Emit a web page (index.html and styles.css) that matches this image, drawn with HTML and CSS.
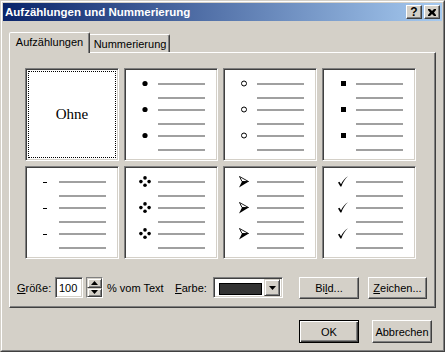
FILE: index.html
```html
<!DOCTYPE html>
<html lang="de">
<head>
    <meta charset="UTF-8">
    <title>Aufzählungen und Nummerierung</title>
    <link rel="stylesheet" href="styles.css">
</head>
<body>
    <div class="window">
        <div class="frame">
            <div class="titlebar">
                <span class="title">Aufzählungen und Nummerierung</span>
                <div class="caption-btns">
                    <div class="cap-btn help">?</div>
                    <div class="cap-btn">
                        <svg width="8" height="7" viewBox="0 0 8 7"><path d="M0 0h2l2 2 2-2h2v1L6 3.5 8 6v1H6L4 5 2 7H0V6l2-2.5L0 1z" fill="#000"/></svg>
                    </div>
                </div>
            </div>

            <div class="content">
                <div class="tabs">
                    <div class="tab active">Aufzählungen</div>
                    <div class="tab">Nummerierung</div>
                </div>

                <div class="panel">
                    <div class="gallery">
                        <div class="sample none"><span>Ohne</span></div>

                        <div class="sample">
                            <div class="entry"><svg class="mark" width="12" height="12"><circle cx="6" cy="5.5" r="2.6"/></svg><i></i><b></b></div>
                            <div class="entry"><svg class="mark" width="12" height="12"><circle cx="6" cy="5.5" r="2.6"/></svg><i></i><b></b></div>
                            <div class="entry"><svg class="mark" width="12" height="12"><circle cx="6" cy="5.5" r="2.6"/></svg><i></i><b></b></div>
                        </div>

                        <div class="sample">
                            <div class="entry"><svg class="mark" width="12" height="12"><circle cx="6" cy="5.5" r="2.5" fill="none" stroke="#000"/></svg><i></i><b></b></div>
                            <div class="entry"><svg class="mark" width="12" height="12"><circle cx="6" cy="5.5" r="2.5" fill="none" stroke="#000"/></svg><i></i><b></b></div>
                            <div class="entry"><svg class="mark" width="12" height="12"><circle cx="6" cy="5.5" r="2.5" fill="none" stroke="#000"/></svg><i></i><b></b></div>
                        </div>

                        <div class="sample">
                            <div class="entry"><svg class="mark" width="12" height="12"><rect x="4" y="3" width="5" height="5"/></svg><i></i><b></b></div>
                            <div class="entry"><svg class="mark" width="12" height="12"><rect x="4" y="3" width="5" height="5"/></svg><i></i><b></b></div>
                            <div class="entry"><svg class="mark" width="12" height="12"><rect x="4" y="3" width="5" height="5"/></svg><i></i><b></b></div>
                        </div>

                        <div class="sample">
                            <div class="entry"><svg class="mark" width="12" height="12"><rect x="3" y="6" width="4" height="1"/></svg><i></i><b></b></div>
                            <div class="entry"><svg class="mark" width="12" height="12"><rect x="3" y="6" width="4" height="1"/></svg><i></i><b></b></div>
                            <div class="entry"><svg class="mark" width="12" height="12"><rect x="3" y="6" width="4" height="1"/></svg><i></i><b></b></div>
                        </div>

                        <div class="sample">
                            <div class="entry"><svg class="mark" width="12" height="12"><circle cx="6" cy="1.9" r="1.8"/><circle cx="1.9" cy="5.6" r="1.8"/><circle cx="10.1" cy="5.6" r="1.8"/><circle cx="6" cy="9.3" r="1.8"/></svg><i></i><b></b></div>
                            <div class="entry"><svg class="mark" width="12" height="12"><circle cx="6" cy="1.9" r="1.8"/><circle cx="1.9" cy="5.6" r="1.8"/><circle cx="10.1" cy="5.6" r="1.8"/><circle cx="6" cy="9.3" r="1.8"/></svg><i></i><b></b></div>
                            <div class="entry"><svg class="mark" width="12" height="12"><circle cx="6" cy="1.9" r="1.8"/><circle cx="1.9" cy="5.6" r="1.8"/><circle cx="10.1" cy="5.6" r="1.8"/><circle cx="6" cy="9.3" r="1.8"/></svg><i></i><b></b></div>
                        </div>

                        <div class="sample">
                            <div class="entry"><svg class="mark" width="12" height="12"><path d="M1.5 0.5L10.5 5.5 4 5.5z" fill="none" stroke="#000" stroke-width="0.9"/><path d="M1 11.5L4 5.5 10.8 5.5z"/></svg><i></i><b></b></div>
                            <div class="entry"><svg class="mark" width="12" height="12"><path d="M1.5 0.5L10.5 5.5 4 5.5z" fill="none" stroke="#000" stroke-width="0.9"/><path d="M1 11.5L4 5.5 10.8 5.5z"/></svg><i></i><b></b></div>
                            <div class="entry"><svg class="mark" width="12" height="12"><path d="M1.5 0.5L10.5 5.5 4 5.5z" fill="none" stroke="#000" stroke-width="0.9"/><path d="M1 11.5L4 5.5 10.8 5.5z"/></svg><i></i><b></b></div>
                        </div>

                        <div class="sample">
                            <div class="entry"><svg class="mark" width="12" height="12"><path d="M1 6.5L2.5 5.8 4 8.3C5.8 4.8 7.8 2.3 11 0.3 8 3 6 6 4.4 10.5H3.4z"/></svg><i></i><b></b></div>
                            <div class="entry"><svg class="mark" width="12" height="12"><path d="M1 6.5L2.5 5.8 4 8.3C5.8 4.8 7.8 2.3 11 0.3 8 3 6 6 4.4 10.5H3.4z"/></svg><i></i><b></b></div>
                            <div class="entry"><svg class="mark" width="12" height="12"><path d="M1 6.5L2.5 5.8 4 8.3C5.8 4.8 7.8 2.3 11 0.3 8 3 6 6 4.4 10.5H3.4z"/></svg><i></i><b></b></div>
                        </div>
                    </div>

                    <div class="options">
                        <label class="lbl size-lbl"><u>G</u>röße:</label>
                        <div class="edit">100</div>
                        <div class="spin">
                            <div class="spin-btn"><svg width="7" height="4"><path d="M3.5 0L7 4H0z"/></svg></div>
                            <div class="spin-btn"><svg width="7" height="4"><path d="M0 0h7L3.5 4z"/></svg></div>
                        </div>
                        <span class="lbl unit-lbl">% vom Text</span>
                        <label class="lbl color-lbl"><u>F</u>arbe:</label>
                        <div class="combo">
                            <div class="swatch"></div>
                            <div class="drop"><svg width="7" height="4"><path d="M0 0h7L3.5 4z"/></svg></div>
                        </div>
                        <button class="btn bild-btn">Bi<u>l</u>d...</button>
                        <button class="btn zeichen-btn"><u>Z</u>eichen...</button>
                    </div>
                </div>

                <div class="actions">
                    <button class="btn default">OK</button>
                    <button class="btn">Abbrechen</button>
                </div>
            </div>
        </div>
    </div>
</body>
</html>
```

FILE: styles.css
```css
* {
    box-sizing: border-box;
}

body {
    margin: 0;
    font-family: "Liberation Sans", Arial, sans-serif;
    font-size: 11px;
    color: #000;
    background: #d4d0c8;
}

.window {
    width: 445px;
    height: 352px;
    border: 1px solid;
    border-color: #d4d0c8 #404040 #404040 #d4d0c8;
    background: #d4d0c8;
}

.frame {
    height: 100%;
    border: 1px solid;
    border-color: #fff #808080 #808080 #fff;
    padding: 1px;
    display: flex;
    flex-direction: column;
}

/* Title bar */
.titlebar {
    height: 18px;
    display: flex;
    align-items: center;
    justify-content: space-between;
    padding: 0 2px;
    background: linear-gradient(to right, #0a246a, #a6caf0);
}

.title {
    color: #fff;
    font-weight: bold;
    font-size: 11.5px;
}

.caption-btns {
    display: flex;
    gap: 2px;
}

.cap-btn {
    width: 16px;
    height: 14px;
    display: flex;
    align-items: center;
    justify-content: center;
    background: #d4d0c8;
    border: 1px solid;
    border-color: #fff #404040 #404040 #fff;
    box-shadow: inset -1px -1px #808080;
}

.cap-btn.help {
    font-weight: bold;
    font-size: 12px;
    line-height: 1;
    padding-bottom: 1px;
}

/* Dialog body */
.content {
    flex: 1;
    padding: 11px 6px 6px;
    display: flex;
    flex-direction: column;
}

.tabs {
    height: 20px;
    display: flex;
    align-items: flex-end;
    position: relative;
    z-index: 1;
}

.tab {
    height: 18px;
    width: 82px;
    display: flex;
    align-items: center;
    justify-content: center;
    padding-left: 2px;
    background: #d4d0c8;
    border: 1px solid;
    border-bottom: none;
    border-color: #fff #404040 transparent #fff;
    border-radius: 2px 2px 0 0;
    box-shadow: inset -1px 0 #808080;
}

.tab.active {
    height: 21px;
    width: 81px;
    margin-bottom: -1px;
    margin-right: -2px;
    padding: 0 0 2px;
    position: relative;
    z-index: 2;
}

.panel {
    height: 256px;
    border: 1px solid;
    border-color: #fff #404040 #404040 #fff;
    box-shadow: inset -1px -1px #808080;
    padding-top: 15px;
}

.gallery {
    margin-left: 15px;
    display: grid;
    grid-template-columns: repeat(4, 94px);
    grid-template-rows: repeat(2, 93px);
    gap: 5px;
}

.sample {
    background: #fff;
    border: 1px solid;
    border-color: #808080 #fff #fff #808080;
    box-shadow: inset 1px 1px #404040, inset -1px -1px #d4d0c8;
    padding-top: 9px;
    display: flex;
    flex-direction: column;
    gap: 5px;
}

.sample.none {
    padding: 0;
    align-items: center;
    justify-content: center;
    font-family: "Liberation Serif", "Times New Roman", serif;
    font-size: 15px;
    outline: 1px dotted #000;
    outline-offset: -4px;
}

.entry {
    display: grid;
    grid-template-columns: 33px 47px;
    grid-template-rows: 12px 2px;
    row-gap: 7px;
    align-items: center;
}

.mark {
    margin-left: 14px;
    fill: #000;
}

.entry i,
.entry b {
    display: block;
    height: 2px;
    background: #a0a0a0;
    grid-column: 2;
}

.entry b {
    grid-row: 2;
}

/* Size / colour row */
.options {
    margin-top: 18px;
    padding-left: 7px;
    height: 21px;
    display: flex;
    align-items: center;
}

.lbl {
    white-space: nowrap;
}

.size-lbl {
    width: 38px;
}

.unit-lbl {
    width: 68px;
    margin-left: 4px;
}

.color-lbl {
    width: 38px;
}

.edit {
    width: 28px;
    height: 21px;
    padding: 4px 0 0 3px;
    background: #fff;
    border: 1px solid;
    border-color: #808080 #fff #fff #808080;
    box-shadow: inset 1px 1px #404040, inset -1px -1px #d4d0c8;
}

.spin {
    width: 17px;
    height: 21px;
    margin-left: 3px;
    border: 1px solid;
    border-color: #808080 #fff #fff #808080;
    display: flex;
    flex-direction: column;
}

.spin-btn {
    flex: 1;
    display: flex;
    align-items: center;
    justify-content: center;
    border: 1px solid;
    border-color: #d4d0c8 #404040 #404040 #d4d0c8;
    box-shadow: inset 1px 1px #fff, inset -1px -1px #808080;
}

.combo {
    width: 70px;
    height: 21px;
    padding: 4px 2px 2px 5px;
    display: flex;
    align-items: center;
    gap: 2px;
    background: #fff;
    border: 1px solid;
    border-color: #808080 #fff #fff #808080;
    box-shadow: inset 1px 1px #404040, inset -1px -1px #d4d0c8;
}

.swatch {
    width: 45px;
    height: 12px;
    background: #333;
    border: 1px solid #000;
    align-self: flex-start;
    margin-top: 1px;
}

.drop {
    width: 16px;
    height: 17px;
    margin-top: -2px;
    display: flex;
    align-items: center;
    justify-content: center;
    background: #d4d0c8;
    border: 1px solid;
    border-color: #d4d0c8 #404040 #404040 #d4d0c8;
    box-shadow: inset 1px 1px #fff, inset -1px -1px #808080;
}

/* Push buttons */
.btn {
    font: inherit;
    color: #000;
    padding: 0;
    height: 22px;
    background: #d4d0c8;
    border: 1px solid;
    border-color: #fff #404040 #404040 #fff;
    box-shadow: inset -1px -1px #808080;
}

.bild-btn {
    width: 60px;
    margin-left: 16px;
}

.zeichen-btn {
    width: 59px;
    margin-left: 9px;
}

.actions {
    margin-top: 12px;
    padding-right: 4px;
    display: flex;
    justify-content: flex-end;
    gap: 13px;
}

.actions .btn {
    width: 60px;
    height: 23px;
}

.btn.default {
    border: 1px solid #000;
    box-shadow: inset 1px 1px #fff, inset -1px -1px #404040, inset -2px -2px #808080;
}
```
